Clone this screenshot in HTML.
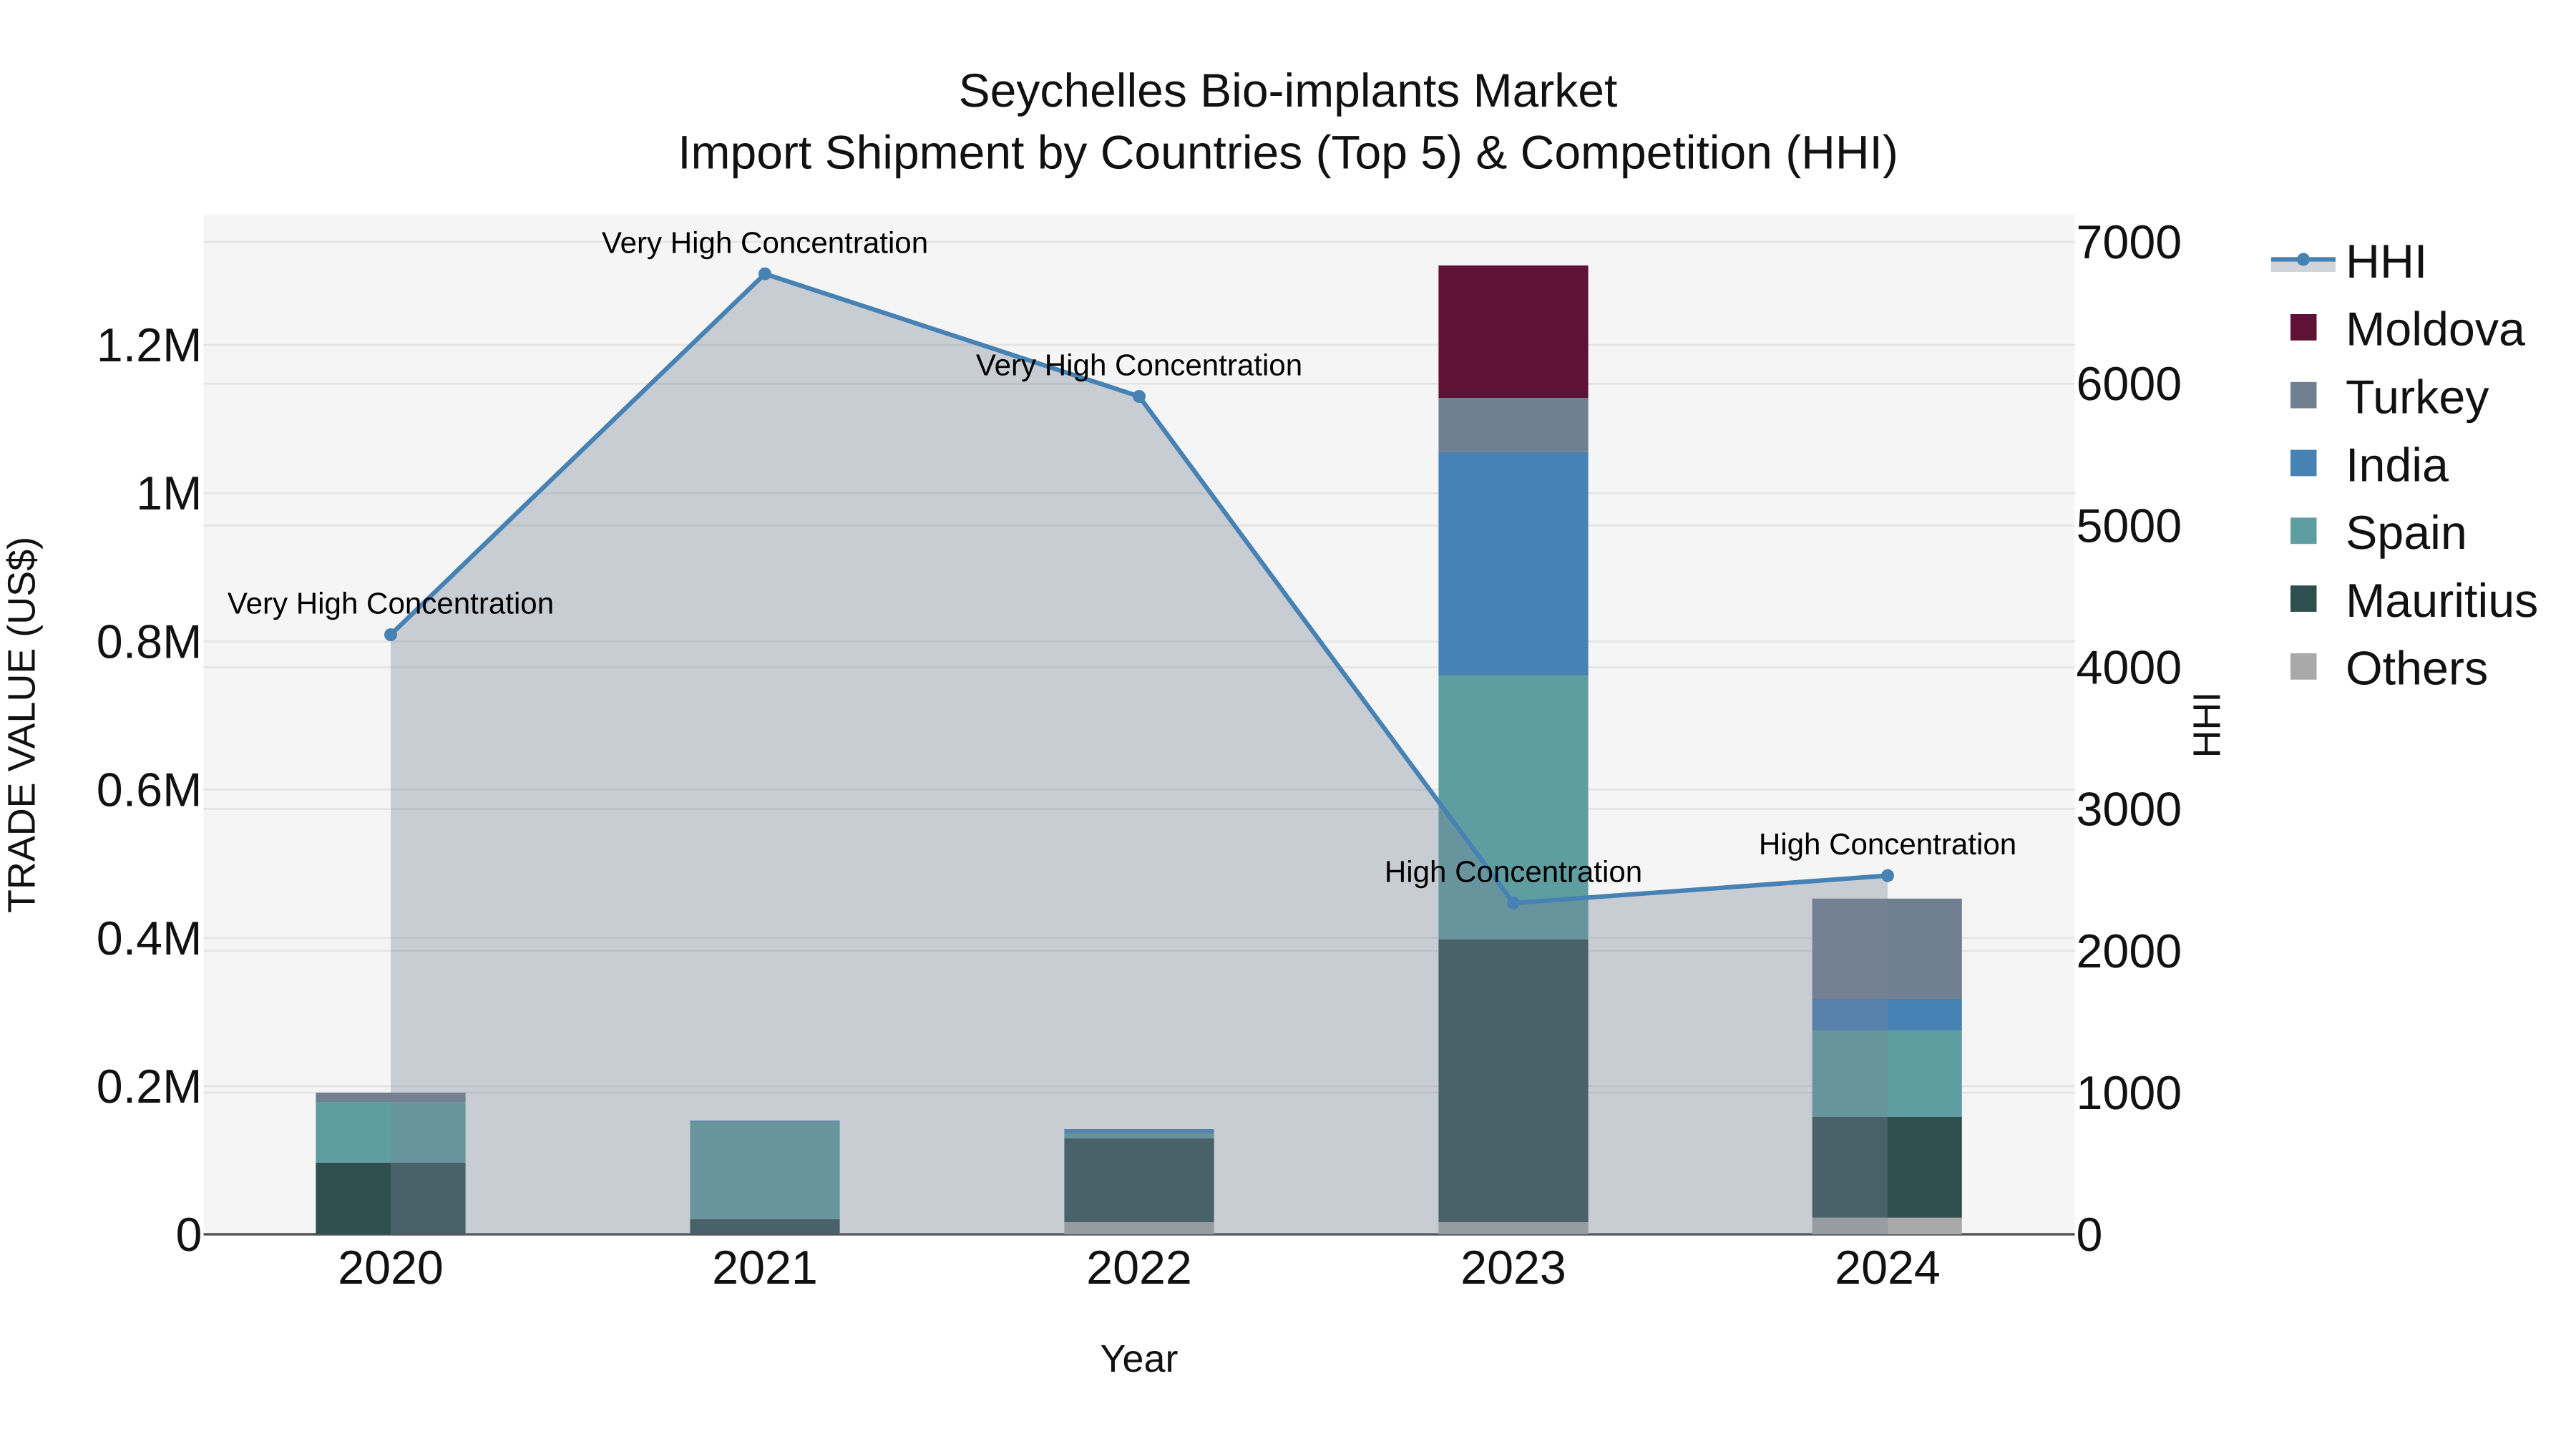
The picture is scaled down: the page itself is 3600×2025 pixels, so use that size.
<!DOCTYPE html>
<html>
<head>
<meta charset="utf-8">
<style>
html,body{margin:0;padding:0;background:#fff;width:3600px;height:2025px;overflow:hidden}
svg{display:block}
text{font-family:"Liberation Sans",sans-serif;fill:#111;text-rendering:geometricPrecision}
.tick{font-size:66.4px}
.ann{font-size:42.1px;fill:#000;text-anchor:middle}
.axt{font-size:53.9px;text-anchor:middle}
.ttl{font-size:66px;text-anchor:middle}
.l{text-anchor:end}
.m{text-anchor:middle}
</style>
</head>
<body>
<svg xmlns="http://www.w3.org/2000/svg" width="3600" height="2025" viewBox="0 0 3600 2025">
<rect width="3600" height="2025" fill="#fff"/>
<rect x="284.5" y="300" width="2615" height="1425" fill="#f5f5f5"/>
<g stroke="#e4e4e4" stroke-width="2.6">
<path d="M284.5 338H2899.5M284.5 536.2H2899.5M284.5 734.3H2899.5M284.5 932.5H2899.5M284.5 1130.6H2899.5M284.5 1328.8H2899.5M284.5 1526.9H2899.5"/>
<path d="M284.5 482H2899.5M284.5 689.2H2899.5M284.5 896.4H2899.5M284.5 1103.6H2899.5M284.5 1310.8H2899.5M284.5 1518H2899.5"/>
</g>
<rect x="284.5" y="1723.2" width="2615" height="3.5" fill="#555"/>

<!-- 2020 -->
<rect x="441.4" y="1527" width="209.2" height="13" fill="#708090"/>
<rect x="441.4" y="1540" width="209.2" height="85" fill="#5f9ea0"/>
<rect x="441.4" y="1625" width="209.2" height="100" fill="#2f4f4f"/>
<!-- 2021 -->
<rect x="964.4" y="1566" width="209.2" height="1.7" fill="#4682b4"/>
<rect x="964.4" y="1567.7" width="209.2" height="136.3" fill="#5f9ea0"/>
<rect x="964.4" y="1704" width="209.2" height="21" fill="#2f4f4f"/>
<!-- 2022 -->
<rect x="1487.4" y="1578" width="209.2" height="6.7" fill="#4682b4"/>
<rect x="1487.4" y="1584.7" width="209.2" height="6.3" fill="#5f9ea0"/>
<rect x="1487.4" y="1591" width="209.2" height="117" fill="#2f4f4f"/>
<rect x="1487.4" y="1708" width="209.2" height="17" fill="#a9a9a9"/>
<!-- 2023 -->
<rect x="2010.4" y="371" width="209.2" height="185" fill="#601236"/>
<rect x="2010.4" y="556" width="209.2" height="75.8" fill="#708090"/>
<rect x="2010.4" y="631.8" width="209.2" height="312.2" fill="#4682b4"/>
<rect x="2010.4" y="944" width="209.2" height="369" fill="#5f9ea0"/>
<rect x="2010.4" y="1313" width="209.2" height="395" fill="#2f4f4f"/>
<rect x="2010.4" y="1708" width="209.2" height="17" fill="#a9a9a9"/>
<!-- 2024 -->
<rect x="2532.6" y="1255.8" width="209.2" height="140.2" fill="#708090"/>
<rect x="2532.6" y="1396" width="209.2" height="44" fill="#4682b4"/>
<rect x="2532.6" y="1440" width="209.2" height="121" fill="#5f9ea0"/>
<rect x="2532.6" y="1561" width="209.2" height="140.8" fill="#2f4f4f"/>
<rect x="2532.6" y="1701.8" width="209.2" height="23.2" fill="#a9a9a9"/>

<!-- HHI area + line -->
<path d="M546 887L1069 382.7L1592 554L2115 1262L2638 1223.7V1725H546Z" fill="rgb(120,132,150)" fill-opacity=".355"/>
<path d="M546 887L1069 382.7L1592 554L2115 1262L2638 1223.7" fill="none" stroke="#4682b4" stroke-width="6.3" stroke-linejoin="round"/>
<g fill="#4682b4">
<circle cx="546" cy="887" r="9"/>
<circle cx="1069" cy="382.7" r="9"/>
<circle cx="1592" cy="554" r="9"/>
<circle cx="2115" cy="1262" r="9"/>
<circle cx="2638" cy="1223.7" r="9"/>
</g>

<!-- annotations -->
<text class="ann" x="546" y="857.5">Very High Concentration</text>
<text class="ann" x="1069" y="353.5">Very High Concentration</text>
<text class="ann" x="1592" y="524.5">Very High Concentration</text>
<text class="ann" x="2115" y="1232.5">High Concentration</text>
<text class="ann" x="2638" y="1194">High Concentration</text>

<!-- left ticks -->
<text class="tick l" x="282.4" y="505">1.2M</text>
<text class="tick l" x="282.4" y="712.2">1M</text>
<text class="tick l" x="282.4" y="919.4">0.8M</text>
<text class="tick l" x="282.4" y="1126.6">0.6M</text>
<text class="tick l" x="282.4" y="1333.8">0.4M</text>
<text class="tick l" x="282.4" y="1541">0.2M</text>
<text class="tick l" x="282.4" y="1748.2">0</text>

<!-- right ticks -->
<text class="tick" x="2901.5" y="361">7000</text>
<text class="tick" x="2901.5" y="559.2">6000</text>
<text class="tick" x="2901.5" y="757.3">5000</text>
<text class="tick" x="2901.5" y="955.5">4000</text>
<text class="tick" x="2901.5" y="1153.6">3000</text>
<text class="tick" x="2901.5" y="1351.8">2000</text>
<text class="tick" x="2901.5" y="1549.9">1000</text>
<text class="tick" x="2901.5" y="1748.2">0</text>

<!-- x ticks -->
<text class="tick m" x="546" y="1794">2020</text>
<text class="tick m" x="1069" y="1794">2021</text>
<text class="tick m" x="1592" y="1794">2022</text>
<text class="tick m" x="2115" y="1794">2023</text>
<text class="tick m" x="2638" y="1794">2024</text>

<!-- titles -->
<text class="ttl" x="1800" y="149">Seychelles Bio-implants Market</text>
<text class="ttl" x="1800" y="235.7">Import Shipment by Countries (Top 5) &amp; Competition (HHI)</text>
<text class="axt" x="1592" y="1917">Year</text>
<text class="axt" transform="translate(48.3 1013) rotate(-90)">TRADE VALUE (US$)</text>
<text class="axt" transform="translate(3102.6 1013) rotate(-90)">HHI</text>

<!-- legend -->
<rect x="3174" y="362.5" width="90" height="17.5" fill="rgb(120,132,150)" fill-opacity=".355"/>
<rect x="3174" y="359.3" width="90" height="6.3" fill="#4682b4"/>
<circle cx="3219" cy="362.5" r="9" fill="#4682b4"/>
<text class="tick" x="3278" y="388">HHI</text>
<rect x="3201" y="439" width="36.5" height="36.8" fill="#601236"/>
<text class="tick" x="3278" y="482.7">Moldova</text>
<rect x="3201" y="533.8" width="36.5" height="36.8" fill="#708090"/>
<text class="tick" x="3278" y="577.5">Turkey</text>
<rect x="3201" y="628.6" width="36.5" height="36.8" fill="#4682b4"/>
<text class="tick" x="3278" y="672.3">India</text>
<rect x="3201" y="723.4" width="36.5" height="36.8" fill="#5f9ea0"/>
<text class="tick" x="3278" y="767.1">Spain</text>
<rect x="3201" y="818.2" width="36.5" height="36.8" fill="#2f4f4f"/>
<text class="tick" x="3278" y="861.9">Mauritius</text>
<rect x="3201" y="913" width="36.5" height="36.8" fill="#a9a9a9"/>
<text class="tick" x="3278" y="956.7">Others</text>
</svg>
</body>
</html>
